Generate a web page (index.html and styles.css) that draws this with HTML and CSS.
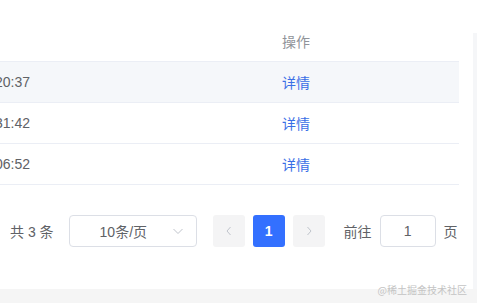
FILE: index.html
```html
<!DOCTYPE html>
<html>
<head>
    <title>订单列表</title>
    <link rel="stylesheet" href="styles.css">
</head>
<body>
<div class="page">
    <div class="card">
        <!-- Table -->
        <div class="table-wrap">
            <div class="table">
                <div class="row head">
                    <div class="cell cell-time">创建时间</div>
                    <div class="cell cell-op">操作</div>
                </div>
                <div class="row hover">
                    <div class="cell cell-time">2023-02-14 10:20:37</div>
                    <div class="cell cell-op"><a class="link" href="#">详情</a></div>
                </div>
                <div class="row">
                    <div class="cell cell-time">2023-02-13 18:31:42</div>
                    <div class="cell cell-op"><a class="link" href="#">详情</a></div>
                </div>
                <div class="row">
                    <div class="cell cell-time">2023-02-10 09:06:52</div>
                    <div class="cell cell-op"><a class="link" href="#">详情</a></div>
                </div>
            </div>
        </div>

        <!-- Pagination -->
        <div class="pagination">
            <span class="total">共 3 条</span>
            <div class="sizes">
                <span>10条/页</span>
                <svg class="arrow" width="12" height="12" viewBox="0 0 12 12"><path d="M1.5 4 L6 8.5 L10.5 4" fill="none" stroke="#c0c4cc" stroke-width="1"/></svg>
            </div>
            <div class="pager">
                <button class="btn-nav" disabled>
                    <svg width="10" height="10" viewBox="0 0 10 10"><path d="M6.5 1 L3 5 L6.5 9" fill="none" stroke="#c0c4cc" stroke-width="1"/></svg>
                </button>
                <button class="btn-page active">1</button>
                <button class="btn-nav" disabled>
                    <svg width="10" height="10" viewBox="0 0 10 10"><path d="M3.5 1 L7 5 L3.5 9" fill="none" stroke="#c0c4cc" stroke-width="1"/></svg>
                </button>
            </div>
            <span class="jump">前往</span>
            <input class="jump-input" type="text" value="1">
            <span class="jump-end">页</span>
        </div>
    </div>
    <div class="scroll-track"></div>
</div>
<div class="footer-band"></div>
<div class="watermark">@稀土掘金技术社区</div>
</body>
</html>
```

FILE: styles.css
```css
/* Body styles */
body {
    margin: 0;
    padding: 0;
    font-family: "Liberation Sans", "Noto Sans CJK SC", sans-serif;
    font-size: 14px;
    color: #606266;
    background-color: #fff;
    overflow: hidden;
}

.page {
    display: flex;
    height: 289px;
}

.card {
    width: 473px;
    padding-top: 21px;
    background-color: #fff;
}

.scroll-track {
    width: 4px;
    margin-top: 33px;
    background-color: #f5f6f8;
}

/* Table styles */
.table-wrap {
    width: 459px;
    overflow: hidden;
}

.table {
    width: 571px;
    margin-left: -112px;
}

.row {
    display: flex;
    align-items: center;
    height: 40px;
    border-bottom: 1px solid #ebeef5;
}

.row.head {
    color: #909399;
}

.row.hover {
    background-color: #f5f7fa;
}

.cell {
    padding: 0 12px;
    box-sizing: border-box;
    white-space: nowrap;
}

.cell-time {
    width: 382px;
}

.cell-op {
    flex: 1;
}

.link {
    color: #3a6fe6;
    text-decoration: none;
}

/* Pagination styles */
.pagination {
    display: flex;
    align-items: center;
    height: 32px;
    margin-top: 30px;
    padding-left: 10px;
}

.total {
    margin-right: 15px;
}

.sizes {
    display: flex;
    align-items: center;
    justify-content: space-between;
    box-sizing: border-box;
    width: 128px;
    height: 32px;
    padding: 0 12px 0 30px;
    border: 1px solid #dcdfe6;
    border-radius: 4px;
}

.arrow {
    display: block;
}

.pager {
    display: flex;
    gap: 8px;
    margin-left: 16px;
}

.pager button {
    width: 32px;
    height: 32px;
    padding: 0;
    border: none;
    border-radius: 3px;
    font-family: inherit;
    font-size: 14px;
    display: flex;
    align-items: center;
    justify-content: center;
}

.btn-nav {
    background-color: #f4f4f5;
}

.btn-page.active {
    background-color: #3370ff;
    color: #fff;
    font-weight: bold;
}

.jump {
    margin-left: 19px;
}

.jump-input {
    box-sizing: border-box;
    width: 56px;
    height: 32px;
    margin-left: 8px;
    border: 1px solid #dcdfe6;
    border-radius: 4px;
    text-align: center;
    font-family: inherit;
    font-size: 14px;
    color: #606266;
    outline: none;
}

.jump-end {
    margin-left: 8px;
}

/* Bottom band and watermark */
.footer-band {
    height: 14px;
    background-color: #f5f5f5;
}

.watermark {
    position: absolute;
    right: 10px;
    top: 282px;
    font-size: 10px;
    color: #c4c4c4;
    font-family: "Noto Sans CJK SC", sans-serif;
}
```
